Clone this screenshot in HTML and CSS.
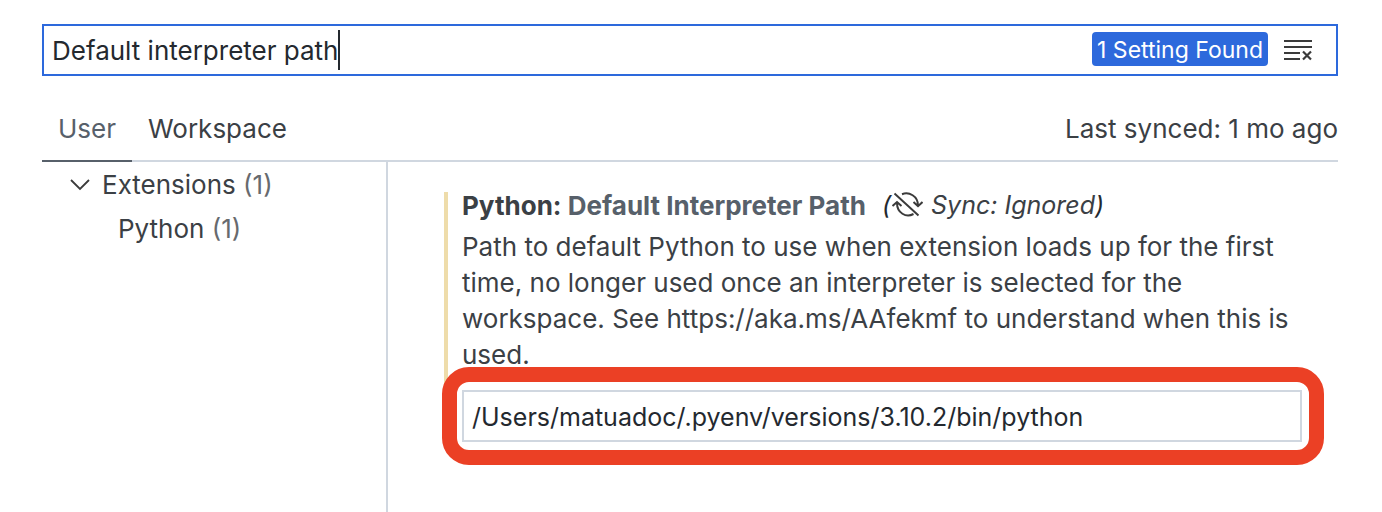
FILE: index.html
```html
<!DOCTYPE html>
<html lang="en">
<head>
<meta charset="utf-8">
<title>Settings</title>
<link rel="stylesheet" href="styles.css">
</head>
<body>
<main class="settings">
  <div class="search">
    <input class="search-input" type="text" aria-label="Search settings" value="Default interpreter path" autofocus>
    <span class="caret" aria-hidden="true"></span>
    <span class="count">1 Setting Found</span>
    <button class="clear" type="button" aria-label="Clear search results">
      <svg viewBox="0 0 28 22" width="28" height="22" fill="none" stroke="#3b3b3b" stroke-width="2">
        <path d="M0 2h28M0 8h28M0 14h16M0 20h16"/><path d="M19 12.500l8 8M27 12.500l-8 8" stroke-width="2.200"/>
      </svg>
    </button>
  </div>
  <header class="bar">
    <nav class="tabs">
      <button class="tab active" type="button">User</button>
      <button class="tab" type="button">Workspace</button>
    </nav>
    <span class="sync-time">Last synced: 1 mo ago</span>
  </header>
  <div class="body">
    <aside class="tree">
      <button class="node" type="button">
        <svg viewBox="0 0 20 12" width="20" height="12" fill="none" stroke="#3b3b3b" stroke-width="1.800"><path d="M1 1l9 9 9-9"/></svg>
        <span>Extensions <span class="num">(1)</span></span>
      </button>
      <button class="node child" type="button"><span>Python <span class="num">(1)</span></span></button>
    </aside>
    <section class="setting">
      <div class="item">
        <h1 class="title">
          <label for="path">Python: <span class="key">Default Interpreter Path</span></label>
          <span class="ignored"><span class="paren">(</span><svg class="sync-icon" viewBox="0 0 32 26" width="32" height="26" fill="none" stroke="#3b3b3b" stroke-width="2"><path d="M3.500 1.500L27.500 23.500M11 2.200C18-.500 27 4 27 13.500M22.500 10L27 14.200L31.500 10M22.500 22C15 26 6 21 6 11M1.500 14L6 10L10.500 14"/></svg><span>Sync: Ignored<span class="paren">)</span></span></span>
        </h1>
        <p class="description">Path to default Python to use when extension loads up for the first time, no longer used once an interpreter is selected for the workspace. See https://aka.ms/AAfekmf to understand when this is used.</p>
        <div class="control"><input class="value" id="path" type="text" value="/Users/matuadoc/.pyenv/versions/3.10.2/bin/python"></div>
      </div>
    </section>
  </div>
</main>
</body>
</html>
```
FILE: styles.css
```css
* { box-sizing: border-box; }
body { margin: 0; background: #fff; color: #3b4045; font: 26px/36px Inter, sans-serif; }
button, input { font: inherit; color: inherit; border: 0; padding: 0; background: none; outline: 0; }
.settings { display: flex; flex-direction: column; min-height: 100vh; padding: 24px 44px 0 42px; }
.search { display: flex; align-items: center; height: 52px; border: 2px solid #2d69dc; padding: 0 24px 0 8px; }
.search-input { field-sizing: content; padding-top: 2px; color: #24292f; caret-color: transparent; }
.caret { width: 2px; height: 40px; background: #24292f; }
.count { margin-left: auto; margin-bottom: 2px; padding: 2px 5px 0; border-radius: 4px; background: #2d69dc; color: #fff; font-size: 23px; line-height: 32px; }
.clear { display: flex; margin-left: 16px; }
.bar { display: flex; justify-content: space-between; height: 86px; padding-top: 32px; border-bottom: 2px solid #d0d7e0; }
.tabs { display: flex; }
.tab { height: 54px; padding: 2px 16px 12px; border-bottom: 2px solid transparent; }
.active { color: #57606a; border-color: #57606a; }
.sync-time { line-height: 42px; }
.body { display: flex; flex: 1; }
.tree { display: flex; flex-direction: column; width: 346px; padding-top: 1px; border-right: 2px solid #d0d7e0; }
.node { display: flex; align-items: center; gap: 12px; height: 44px; padding-left: 28px; }
.child { padding-left: 76px; }
.num { color: #676a6e; }
.setting { flex: 1; padding: 30px 36px 0 56px; }
.item { padding-left: 14px; border-left: 4px solid #eedcaa; }
.title { display: flex; gap: 16px; margin: 0 0 10px; font-size: 26px; line-height: 27px; font-weight: 700; }
.key { color: #57606a; }
.ignored { display: flex; font-size: 25px; font-weight: 400; font-style: italic; }
.paren { color: #24292f; }
.sync-icon { margin-right: 8px; }
.description { margin: 0 0 17px; }
.control { position: relative; display: flex; }
.control::after { content: ""; position: absolute; inset: -23px -22px -23px -20px; border: 15px solid #eb4025; border-radius: 27px; pointer-events: none; }
.value { width: 100%; height: 52px; border: 2px solid #d0d7e0; padding: 2px 8px 0; color: #24292f; font-size: 25px; }
```
